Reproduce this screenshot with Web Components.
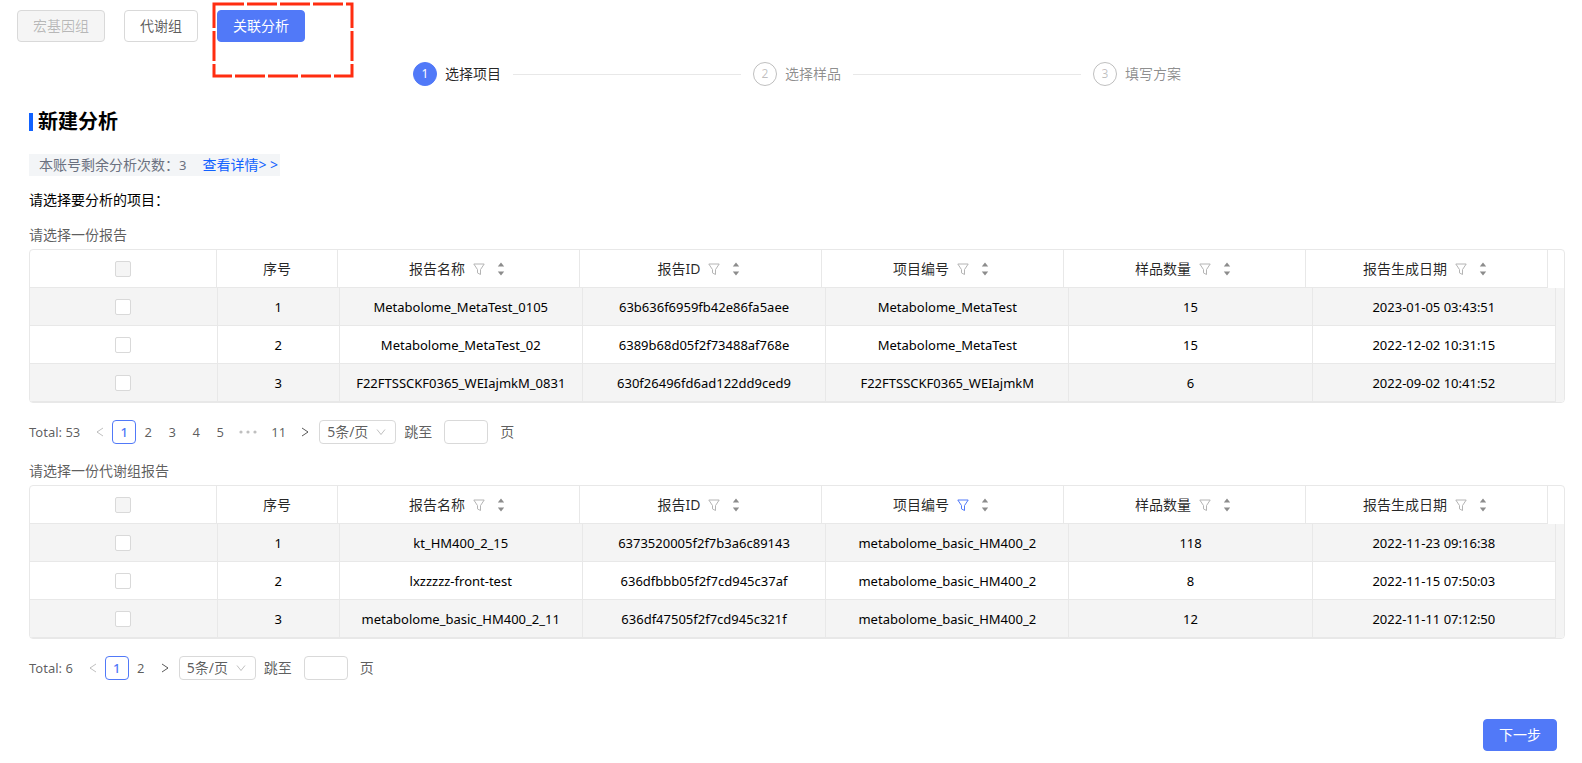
<!DOCTYPE html>
<html lang="zh-CN">
<head>
<meta charset="utf-8">
<meta name="viewport" content="width=device-width, initial-scale=1">
<title>新建分析</title>
<style>
  body {
    margin: 0;
    background: #fff;
    color: rgba(0, 0, 0, 0.85);
    font: 14px/22px "Noto Sans", "Noto Sans CJK SC", sans-serif;
    --primary: #5179f8;
    --line: #e8e8e8;
    --control: #d9d9d9;
    --stripe: #f4f4f4;
    --muted: rgba(0, 0, 0, 0.65);
    --latin: 13px;
  }
</style>
</head>
<body>
<analysis-page></analysis-page>

<script>
const define = (name, html, setup) => {
  const template = document.createElement('template');
  template.innerHTML = html;
  customElements.define(name, class extends HTMLElement {
    constructor() {
      super();
      this.attachShadow({ mode: 'open' }).append(template.content.cloneNode(true));
    }
    connectedCallback() {
      if (setup && !this.ready) { this.ready = true; setup(this, this.shadowRoot); }
    }
  });
};

/* Button: default, primary or disabled */
define('app-button', `
<style>
  :host { display: inline-block; }
  button { box-sizing: border-box; height: 32px; padding: 0 15px; border: 1px solid var(--control); border-radius: 4px;
    background: #fff; color: var(--muted); font: inherit; cursor: pointer; display: block; }
  :host([primary]) button { background: var(--primary); border-color: var(--primary); color: #fff; }
  button:disabled { background: #f5f5f5; color: rgba(0, 0, 0, 0.25); cursor: not-allowed; }
</style>
<button type="button"><slot></slot></button>`, (host, root) => {
  root.querySelector('button').disabled = host.hasAttribute('disabled');
});

/* One step of the wizard */
define('flow-step', `
<style>
  :host { display: flex; align-items: center; color: rgba(0, 0, 0, 0.45); }
  :host(:not([last])) { flex: 1; }
  .num { box-sizing: border-box; width: 24px; height: 24px; border: 1px solid rgba(0, 0, 0, 0.25); border-radius: 50%;
    display: grid; place-items: center; font-size: 12px; color: rgba(0, 0, 0, 0.25); margin-right: 8px; }
  .line { flex: 1; height: 1px; background: var(--line); margin: 0 12px; }
  :host([last]) .line { display: none; }
  :host([active]) { color: rgba(0, 0, 0, 0.85); }
  :host([active]) .num { background: var(--primary); border-color: var(--primary); color: #fff; }
</style>
<span class="num"></span><slot></slot><span class="line"></span>`, (host, root) => {
  root.querySelector('.num').textContent = host.getAttribute('num');
});

define('flow-steps', `
<style>
  :host { display: flex; width: 50%; margin: 0 auto; }
</style>
<flow-step num="1" active>选择项目</flow-step>
<flow-step num="2">选择样品</flow-step>
<flow-step num="3" last>填写方案</flow-step>`);

/* Header tools: filter funnel and sort carets */
define('column-tools', `
<style>
  :host { display: inline-flex; align-items: center; margin: 0 3px 0 8px; gap: 12px; color: #b4b4b4; }
  :host([filtered]) { color: var(--primary); }
  button { border: 0; padding: 0; background: none; color: inherit; display: block; cursor: pointer; }
  svg { display: block; }
</style>
<button type="button" aria-label="筛选"><svg width="12" height="12" viewBox="0 0 12 12" fill="none" stroke="currentColor" stroke-linejoin="round"><path d="M0.800 1h10.400L7.500 6.600v4.900L4.500 9.900V6.600z"/></svg></button>
<button type="button" aria-label="排序"><svg width="8" height="14" viewBox="0 0 8 14" fill="#8c8c8c"><path d="M4 0.500l3.200 4h-6.400zM4 13.500l3.200-4h-6.400z"/></svg></button>`);

/* Report table: fixed header above a striped body */
define('report-table', `
<style>
  :host { display: block; border: 1px solid var(--line); border-radius: 4px; overflow: hidden; }
  .head { padding-right: 16px; }
  .body { padding-right: 8px; background: var(--stripe); }
  table { width: 100%; table-layout: fixed; border-collapse: separate; border-spacing: 0; }
  th, td { box-sizing: border-box; height: 38px; padding: 0 8px; text-align: center; white-space: nowrap;
    border-right: 1px solid var(--line); border-bottom: 1px solid var(--line); }
  th { font-weight: 400; }
  th > span { display: flex; justify-content: center; align-items: center; }
  td { font-size: var(--latin); color: #000; }
  tr:nth-child(even) td { background: #fff; }
  .check { width: 170px; } .no { width: 110px; } .wide { width: 220px; }
  input { appearance: none; box-sizing: border-box; display: block; width: 16px; height: 16px; margin: 0 auto;
    border: 1px solid var(--control); border-radius: 2px; background: #fff; }
  input:disabled { background: #f5f5f5; }
  input:checked { background: var(--primary); border-color: var(--primary); }
</style>
<div class="head"><table><colgroup></colgroup><thead><tr></tr></thead></table></div>
<div class="body"><table><colgroup></colgroup><tbody></tbody></table></div>`, (host, root) => {
  const cols = '<col class="check"><col class="no">' + '<col class="wide">'.repeat(5);
  root.querySelectorAll('colgroup').forEach(g => g.innerHTML = cols);
  const filtered = host.getAttribute('filtered');
  const names = ['报告名称', '报告ID', '项目编号', '样品数量', '报告生成日期'];
  root.querySelector('thead tr').innerHTML =
    '<th scope="col"><input type="checkbox" disabled aria-label="全选"></th><th scope="col">序号</th>' +
    names.map(n => `<th scope="col"><span>${n}<column-tools${n === filtered ? ' filtered' : ''}></column-tools></span></th>`).join('');
  const body = root.querySelector('tbody');
  body.parentElement.setAttribute('aria-label', host.getAttribute('label'));
  body.innerHTML = REPORTS[host.getAttribute('source')].map((row, i) =>
    `<tr><td><input type="checkbox" aria-label="选择 ${row[0]}"></td><td>${i + 1}</td>${row.map(v => `<td>${v}</td>`).join('')}</tr>`).join('');
});

/* Pagination */
define('page-pager', `
<style>
  :host { display: flex; align-items: center; height: 24px; color: var(--muted); }
  .total { font-size: var(--latin); margin-right: 8px; }
  nav { display: flex; }
  button { box-sizing: border-box; min-width: 24px; height: 24px; padding: 0 6px; border: 1px solid transparent; border-radius: 4px;
    background: none; color: inherit; font: inherit; font-size: var(--latin); line-height: 22px; cursor: pointer;
    display: grid; place-items: center; }
  button[aria-current] { border-color: var(--primary); color: var(--primary); font-weight: 500; }
  button:disabled { color: rgba(0, 0, 0, 0.25); }
  .dots { width: 32px; display: grid; place-items: center; color: rgba(0, 0, 0, 0.25); }
  svg { display: block; fill: none; stroke: currentColor; }
  .size { display: grid; align-items: center; margin: 0 8px 0 2px; }
  .size > * { grid-area: 1 / 1; }
  .size svg { justify-self: end; margin-right: 10px; color: rgba(0, 0, 0, 0.25); pointer-events: none; }
  select, input { box-sizing: border-box; height: 24px; border: 1px solid var(--control); border-radius: 4px; background: #fff;
    font: inherit; color: inherit; margin: 0; }
  select { appearance: none; width: 77px; padding: 0 7px; line-height: 22px; }
  label { display: flex; align-items: center; }
  input { width: 44px; margin: 0 12px; padding: 0 6px; }
</style>
<span class="total"></span>
<nav aria-label="分页"></nav>
<span class="size">
  <select aria-label="每页条数"><option>5条/页</option><option>10条/页</option></select>
  <svg width="10" height="8" viewBox="0 0 10 8"><path d="M1 1.500l4 5 4-5"/></svg>
</span>
<label>跳至<input type="text">页</label>`, (host, root) => {
  root.querySelector('.total').textContent = 'Total: ' + host.getAttribute('total');
  const arrow = d => `<svg width="8" height="12" viewBox="0 0 8 12"><path d="${d}"/></svg>`;
  const pages = host.getAttribute('pages').split(' ').map(p => p === '…'
    ? '<span class="dots"><svg width="18" height="4" viewBox="0 0 18 4"><g fill="currentColor" stroke="none"><circle cx="2" cy="2" r="1.600"/><circle cx="9" cy="2" r="1.600"/><circle cx="16" cy="2" r="1.600"/></g></svg></span>'
    : `<button type="button"${p === '1' ? ' aria-current="page"' : ''}>${p}</button>`).join('');
  root.querySelector('nav').innerHTML =
    `<button type="button" disabled aria-label="上一页">${arrow('M7 2L1 6l6 4')}</button>${pages}<button type="button" aria-label="下一页">${arrow('M1 2l6 4-6 4')}</button>`;
});

const REPORTS = {
  meta: [
    ['Metabolome_MetaTest_0105', '63b636f6959fb42e86fa5aee', 'Metabolome_MetaTest', '15', '2023-01-05 03:43:51'],
    ['Metabolome_MetaTest_02', '6389b68d05f2f73488af768e', 'Metabolome_MetaTest', '15', '2022-12-02 10:31:15'],
    ['F22FTSSCKF0365_WEIajmkM_0831', '630f26496fd6ad122dd9ced9', 'F22FTSSCKF0365_WEIajmkM', '6', '2022-09-02 10:41:52']
  ],
  metabolome: [
    ['kt_HM400_2_15', '6373520005f2f7b3a6c89143', 'metabolome_basic_HM400_2', '118', '2022-11-23 09:16:38'],
    ['lxzzzzz-front-test', '636dfbbb05f2f7cd945c37af', 'metabolome_basic_HM400_2', '8', '2022-11-15 07:50:03'],
    ['metabolome_basic_HM400_2_11', '636df47505f2f7cd945c321f', 'metabolome_basic_HM400_2', '12', '2022-11-11 07:12:50']
  ]
};

/* Titled block: caption, table, pager */
define('report-section', `
<style>
  :host { display: block; }
  p { margin: 0 0 3px; color: var(--muted); }
  ::slotted(page-pager) { margin-top: 17px; }
</style>
<p></p><slot></slot>`, (host, root) => {
  root.querySelector('p').textContent = host.getAttribute('caption');
});

define('analysis-page', `
<style>
  :host { display: block; }
  .tabs { display: flex; gap: 19px; padding: 10px 17px 0; }
  .marked { position: relative; }
  .marked svg { position: absolute; left: -5px; top: -8px; pointer-events: none; }
  main { padding: 20px 17px 12px 29px; }
  h1 { display: flex; align-items: center; gap: 5px; margin: 22px 0 0; font-size: 20px; line-height: 28px; font-weight: 700; color: #000; }
  h1::before { content: ""; width: 4px; height: 18px; background: #1162ff; }
  .quota { display: flex; gap: 16px; width: fit-content; margin-top: 18px; padding: 0 2px 0 10px; background: #f3f5f7; color: #6b7180; }
  a { color: #1162ff; text-decoration: none; }
  small { font-size: var(--latin); }
  .ask { margin: 13px 0; color: #000; }
  report-section + report-section { margin-top: 16px; }
  footer { display: flex; justify-content: flex-end; margin-top: 39px; padding-right: 8px; }
</style>
<div class="tabs">
  <app-button disabled>宏基因组</app-button>
  <app-button>代谢组</app-button>
  <div class="marked">
    <app-button primary>关联分析</app-button>
    <svg width="142" height="78" viewBox="0 0 142 78" fill="none" stroke="#ff2d10" stroke-width="3"><path d="M2 2H140V74H2Z" stroke-dasharray="30 3"/></svg>
  </div>
</div>
<main>
  <flow-steps></flow-steps>
  <h1>新建分析</h1>
  <div class="quota"><span>本账号剩余分析次数：<small>3</small></span><a href="#detail">查看详情&gt; &gt;</a></div>
  <p class="ask">请选择要分析的项目：</p>
  <report-section caption="请选择一份报告">
    <report-table source="meta" label="报告"></report-table>
    <page-pager total="53" pages="1 2 3 4 5 … 11"></page-pager>
  </report-section>
  <report-section caption="请选择一份代谢组报告">
    <report-table source="metabolome" label="代谢组报告" filtered="项目编号"></report-table>
    <page-pager total="6" pages="1 2"></page-pager>
  </report-section>
  <footer><app-button primary>下一步</app-button></footer>
</main>`);
</script>
</body>
</html>
